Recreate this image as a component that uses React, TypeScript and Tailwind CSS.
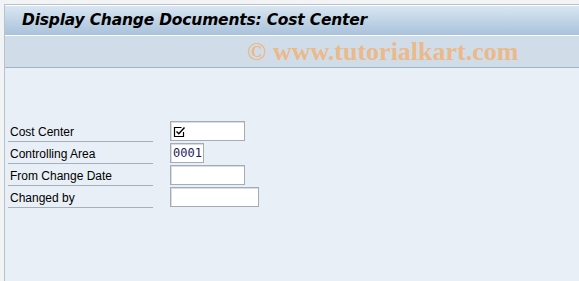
const ROWS = [
  { label: 'Cost Center', width: 'w-[75px]', value: 'check' },
  { label: 'Controlling Area', width: 'w-[34px]', value: '0001' },
  { label: 'From Change Date', width: 'w-[75px]', value: '' },
  { label: 'Changed by', width: 'w-[89px]', value: '' },
];

function CheckGlyph() {
  return (
    <svg width="13" height="12" viewBox="0 0 13 12" className="mt-[1px]" aria-hidden="true">
      <path d="M8.5 1.5H1.5V10.5H10.5V6" fill="none" stroke="#000" strokeWidth="1.2" />
      <path d="M3.5 5.5L5.8 7.8L11.5 1.5" fill="none" stroke="#000" strokeWidth="1.4" />
    </svg>
  );
}

function Field({ width, value }: { width: string; value: string }) {
  return (
    <div
      className={`${width} flex h-[20px] items-center border border-[#a5acb5] bg-white px-[2px] font-['DejaVu_Sans_Mono',monospace] text-[12px] text-[#1b1b5a] shadow-[inset_1px_1px_0_#d8dde3]`}
    >
      {value === 'check' ? <CheckGlyph /> : value}
    </div>
  );
}

export default function App() {
  return (
    <div className="h-[281px] w-[579px] overflow-hidden bg-[#f2f3f5] pt-[4px] pl-[4px] font-['DejaVu_Sans',sans-serif]">
      <div className="flex h-full flex-col border-t border-l border-[#b7c2cf] bg-[#e8eff6]">
        {/* ── Title bar ─────────────────────────────── */}
        <div className="flex h-[30px] items-center border-t border-white bg-gradient-to-b from-[#d9e6f1] to-[#a9c2db] pl-[17px]">
          <h1 className="text-[15.5px] font-bold italic tracking-[-0.2px] text-black">
            Display Change Documents: Cost Center
          </h1>
        </div>

        {/* ── Toolbar (watermark) ───────────────────── */}
        <div className="flex h-[33px] items-center border-t border-white border-b border-b-[#a2b3c8] bg-[#d0dde8] pl-[242px]">
          <span className="font-['Liberation_Serif',serif] text-[26px] leading-none font-bold text-[#ebb98a]">
            © www.tutorialkart.com
          </span>
        </div>

        {/* ── Selection screen ─────────────────────── */}
        <div className="flex flex-col pt-[52px] pl-[3px]">
          {ROWS.map(row => (
            <div key={row.label} className="flex h-[22px] items-center">
              <div className="flex h-[22px] w-[145px] items-center border-b border-[#a7afb8] pt-[2px] pl-[2px] font-['Liberation_Sans',sans-serif] text-[12px] text-black">
                {row.label}
              </div>
              <div className="ml-[17px]">
                <Field width={row.width} value={row.value} />
              </div>
            </div>
          ))}
        </div>
      </div>
    </div>
  );
}
